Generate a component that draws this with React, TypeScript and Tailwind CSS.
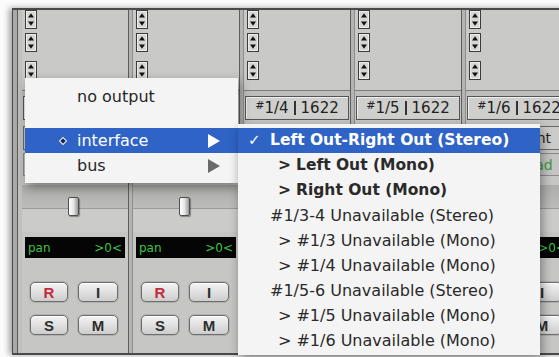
import React from "react";

const strips = [
  { a: "1/2", b: "1622" },
  { a: "1/3", b: "1622" },
  { a: "1/4", b: "1622" },
  { a: "1/5", b: "1622" },
  { a: "1/6", b: "1622" },
];

function Selector() {
  return (
    <svg width="12" height="19" viewBox="0 0 12 19" className="block">
      <rect x="0.5" y="0.5" width="11" height="18" fill="#d6d6d4" stroke="#3c3c3c" />
      <rect x="1.5" y="1.5" width="9" height="16" fill="none" stroke="#f2f2f2" strokeWidth="0.8" />
      <path d="M6 3.2 L9 7.6 L3 7.6Z" fill="#111" />
      <path d="M3 11.4 L9 11.4 L6 15.8Z" fill="#111" />
    </svg>
  );
}

function Btn({ label, red, w }: { label: string; red?: boolean; w: string }) {
  return (
    <div
      className={`${w} h-[20px] rounded-[5px] border border-[#6e6e6e] bg-gradient-to-b from-[#f4f4f4] to-[#cdcdcd] shadow-[0_0_0_1px_#b0b0b0,inset_0_1px_0_#ffffff] flex items-center justify-center text-[15px] font-bold leading-none ${
        red ? "text-[#c42a3e]" : "text-[#2e2e2e]"
      } font-['Liberation_Sans',sans-serif]`}
    >
      {label}
    </div>
  );
}

function Strip({ a, b }: { a: string; b: string }) {
  return (
    <div className="w-[106px] shrink-0 flex flex-col">
      {/* inserts */}
      <div className="h-[80px] flex flex-row bg-[#c9c9c7]">
        <div className="ml-[3px] flex flex-col">
          <Selector />
          <div className="mt-[4px]">
            <Selector />
          </div>
          <div className="mt-[9px]">
            <Selector />
          </div>
        </div>
        <div className="flex-1" />
      </div>
      <div className="h-[6px] border-t border-[#7c7c7a] bg-[#bdbdbb]" />
      {/* input box */}
      <div className="mx-[1px] h-[24px] border border-[#555] bg-[#cfcfcd] shadow-[inset_1px_1px_0_#eeeeee] flex items-center justify-center text-[15px] text-[#222] leading-none">
        <span className="text-[11px] -mt-[5px]">#</span>
        <span>{a}</span>
        <span className="mx-[5px] inline-block w-[2px] h-[14px] bg-[#333]" />
        <span>{b}</span>
      </div>
      <div className="h-[6px]" />
      <div className="mx-[1px] h-[24px] border border-[#6a6a6a] bg-[#cbcbc9] flex items-center justify-center text-[14px] text-[#222] leading-none">
        Mix Front
      </div>
      <div className="h-[3px]" />
      <div className="mx-[1px] h-[23px] border border-[#8a8a8a] bg-[#c4c4c2] flex items-center justify-center text-[14px] text-[#3c9a3c] leading-none">
        auto read
      </div>
      <div className="h-[9px]" />
      {/* fader */}
      <div className="relative h-[47px]">
        <div className="h-[23px] bg-gradient-to-b from-[#adadab] to-[#bcbcba]" />
        <div className="h-[24px] border-t border-[#9a9a98] bg-[#cbcbc9]" />
        <div className="absolute left-[46px] top-[12px] w-[11px] h-[19px] rounded-[2px] border border-[#4e4e4e] bg-gradient-to-r from-[#ffffff] via-[#e6e6e6] to-[#9a9a9a] shadow-[1px_1px_1px_rgba(0,0,0,0.35)]" />
      </div>
      <div className="h-[5px]" />
      {/* pan */}
      <div className="mx-[3px] h-[21px] bg-[#050505] flex items-center justify-between px-[3px] text-[12px] text-[#3fc24a] leading-none">
        <span>pan</span>
        <span>&gt;0&lt;</span>
      </div>
      <div className="h-[24px]" />
      <div className="flex flex-row pl-[8px] gap-[10px]">
        <Btn label="R" red w="w-[38px]" />
        <Btn label="I" w="w-[40px]" />
      </div>
      <div className="h-[13px]" />
      <div className="flex flex-row pl-[8px] gap-[10px]">
        <Btn label="S" w="w-[38px]" />
        <Btn label="M" w="w-[40px]" />
      </div>
      <div className="flex-1" />
    </div>
  );
}

function Divider() {
  return <div className="w-[5px] shrink-0 border-l border-[#5e5e5e] border-r border-r-[#8e8e8c] bg-[#b4b4b2]" />;
}

const subItems: { t: string; bold?: boolean; sub?: boolean; sel?: boolean }[] = [
  { t: "Left Out-Right Out (Stereo)", bold: true, sel: true },
  { t: "Left Out (Mono)", bold: true, sub: true },
  { t: "Right Out (Mono)", bold: true, sub: true },
  { t: "#1/3-4 Unavailable (Stereo)" },
  { t: "#1/3 Unavailable (Mono)", sub: true },
  { t: "#1/4 Unavailable (Mono)", sub: true },
  { t: "#1/5-6 Unavailable (Stereo)" },
  { t: "#1/5 Unavailable (Mono)", sub: true },
  { t: "#1/6 Unavailable (Mono)", sub: true },
];

export default function App() {
  return (
    <div className="relative w-[559px] h-[357px] overflow-hidden bg-[#fbfbfb] font-['DejaVu_Sans',sans-serif]">
      <div className="ml-[12px] mt-[8px] w-[620px] h-[347px] flex flex-row border-t-2 border-l border-b-2 border-[#4a4a4a] bg-[#c6c6c4] shadow-[-3px_0_6px_rgba(0,0,0,0.35)]">
        <div className="w-[9px] shrink-0 flex flex-row">
          <div className="w-[4px] bg-[#a9a9a7]" />
          <div className="w-[1px] bg-[#5a5a5a]" />
          <div className="w-[4px] bg-[#c0c0be]" />
        </div>
        {strips.map((s, i) => (
          <React.Fragment key={i}>
            <Strip a={s.a} b={s.b} />
            {i < strips.length - 1 && <Divider />}
          </React.Fragment>
        ))}
      </div>

      {/* main popup menu */}
      <div className="absolute left-[25px] top-[78px] w-[213px] h-[105px] bg-[#f4f4f4] shadow-[2px_4px_10px_rgba(0,0,0,0.4)] text-[16px] text-[#262626] leading-none">
        <div className="h-[6px]" />
        <div className="h-[25px] flex items-center pl-[52px]">no output</div>
        <div className="h-[19px]" />
        <div className="relative h-[25px] flex items-center pl-[52px] bg-[#2f64c6] text-white">
          <div className="absolute left-[35px] top-[10px] w-[6px] h-[6px] rotate-45 border-[1.5px] border-white bg-[#1a2a55]" />
          interface
          <svg width="12" height="14" viewBox="0 0 12 14" className="absolute left-[183px] top-[6px]">
            <path d="M0 0 L12 7 L0 14Z" fill="#ffffff" />
          </svg>
        </div>
        <div className="relative h-[25px] flex items-center pl-[52px]">
          bus
          <svg width="12" height="14" viewBox="0 0 12 14" className="absolute left-[183px] top-[6px]">
            <path d="M0 0 L12 7 L0 14Z" fill="#6a6a6a" />
          </svg>
        </div>
      </div>

      {/* submenu */}
      <div className="absolute left-[238px] top-[124px] w-[302px] h-[231px] bg-[#f4f4f4] shadow-[2px_4px_10px_rgba(0,0,0,0.4)] text-[16px] text-[#2a2a2a] leading-none">
        <div className="h-[4px]" />
        {subItems.map((it, i) => (
          <div
            key={i}
            className={`relative h-[25px] flex items-center whitespace-nowrap ${it.sel ? "bg-[#2f64c6] text-white" : ""} ${
              it.bold ? "font-bold text-[15.5px]" : ""
            } ${it.sub ? "pl-[40px]" : "pl-[32px]"}`}
          >
            {it.sel && <span className="absolute left-[10px] top-[5px] text-[15px] font-normal">✓</span>}
            {it.sub && <span className="mr-[5px]">&gt;</span>}
            {it.t}
          </div>
        ))}
      </div>
    </div>
  );
}
